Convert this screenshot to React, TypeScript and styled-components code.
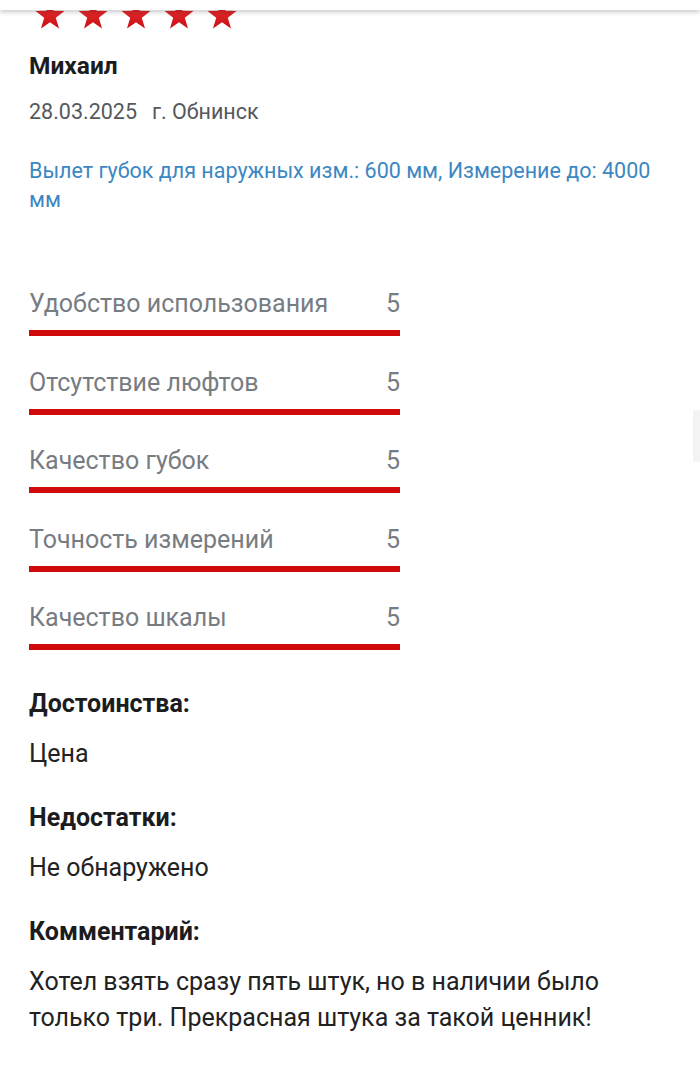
import React from 'react';
import styled, { createGlobalStyle } from 'styled-components';

const GlobalStyle = createGlobalStyle`
  html, body {
    margin: 0;
    padding: 0;
    background: #fff;
  }
  body {
    font-family: Roboto, "Noto Sans", Arial, sans-serif;
    -webkit-font-smoothing: antialiased;
  }
`;

const Page = styled.div`
  position: relative;
  width: 700px;
  min-height: 1067px;
  overflow: hidden;
  background: #fff;
`;

const TopBar = styled.div`
  position: absolute;
  top: 0;
  left: 0;
  right: 0;
  height: 10px;
  background: #fff;
  box-shadow: 0 2px 5px rgba(0, 0, 0, 0.22);
  z-index: 2;
`;

const ScrollThumb = styled.div`
  position: absolute;
  right: 0;
  top: 410px;
  width: 7px;
  height: 52px;
  background: #f3f3f3;
`;

const Review = styled.article`
  padding: 0 29px 40px;
`;

const Stars = styled.div`
  display: flex;
  gap: 13px;
  padding-left: 6px;
  height: 30px;
`;

const StarIcon = () => (
  <svg width="30" height="30" viewBox="0 0 30 30">
    <defs>
      <linearGradient id="starFill" x1="0" y1="0" x2="0" y2="1">
        <stop offset="0" stopColor="#f03a3a" />
        <stop offset="1" stopColor="#c80d12" />
      </linearGradient>
    </defs>
    <path
      d="M15 0.5 L18.6 10.8 L29.5 11.1 L20.8 17.8 L24 28.5 L15 22.2 L6 28.5 L9.2 17.8 L0.5 11.1 L11.4 10.8 Z"
      fill="url(#starFill)"
    />
  </svg>
);

const Author = styled.div`
  margin-top: 20px;
  font-size: 24.5px;
  line-height: 32px;
  font-weight: 700;
  color: #1b1c1e;
`;

const Meta = styled.div`
  display: flex;
  gap: 15px;
  margin-top: 15px;
  font-size: 21.5px;
  line-height: 30px;
  color: #55585c;
`;

const Variant = styled.p`
  margin: 29px 0 0;
  font-size: 21.5px;
  line-height: 29px;
  color: #3c87c2;
`;

const Ratings = styled.div`
  margin-top: 74px;
  width: 371px;
  display: flex;
  flex-direction: column;
  gap: 30.5px;
`;

const RatingRow = styled.div`
  display: flex;
  flex-direction: column;
  gap: 10px;
`;

const RatingHead = styled.div`
  display: flex;
  justify-content: space-between;
  font-size: 25px;
  line-height: 32px;
  color: #777c82;
`;

const Bar = styled.div<{ $value: number }>`
  height: 6px;
  background: #e3e3e3;
  position: relative;
  &::after {
    content: '';
    position: absolute;
    left: 0;
    top: 0;
    bottom: 0;
    width: ${(p) => (p.$value / 5) * 100}%;
    background: #d00a0a;
  }
`;

const Section = styled.section`
  margin-top: 38px;
  & + & {
    margin-top: 30px;
  }
`;

const SectionTitle = styled.h3`
  margin: 0;
  font-size: 25px;
  line-height: 32px;
  font-weight: 700;
  color: #1b1c1e;
`;

const SectionText = styled.p`
  margin: 16px 0 0;
  font-size: 25px;
  line-height: 36px;
  color: #222;
`;

const ratings = [
  { label: 'Удобство использования', value: 5 },
  { label: 'Отсутствие люфтов', value: 5 },
  { label: 'Качество губок', value: 5 },
  { label: 'Точность измерений', value: 5 },
  { label: 'Качество шкалы', value: 5 },
];

const sections = [
  { title: 'Достоинства:', text: 'Цена' },
  { title: 'Недостатки:', text: 'Не обнаружено' },
  {
    title: 'Комментарий:',
    text: 'Хотел взять сразу пять штук, но в наличии было только три. Прекрасная штука за такой ценник!',
  },
];

export default function App() {
  return (
    <Page>
      <GlobalStyle />
      <TopBar />
      <ScrollThumb />
      <Review>
        <Stars>
          {[0, 1, 2, 3, 4].map((i) => (
            <StarIcon key={i} />
          ))}
        </Stars>
        <Author>Михаил</Author>
        <Meta>
          <span>28.03.2025</span>
          <span>г. Обнинск</span>
        </Meta>
        <Variant>Вылет губок для наружных изм.: 600 мм, Измерение до: 4000 мм</Variant>
        <Ratings>
          {ratings.map((r) => (
            <RatingRow key={r.label}>
              <RatingHead>
                <span>{r.label}</span>
                <span>{r.value}</span>
              </RatingHead>
              <Bar $value={r.value} />
            </RatingRow>
          ))}
        </Ratings>
        {sections.map((s) => (
          <Section key={s.title}>
            <SectionTitle>{s.title}</SectionTitle>
            <SectionText>{s.text}</SectionText>
          </Section>
        ))}
      </Review>
    </Page>
  );
}
